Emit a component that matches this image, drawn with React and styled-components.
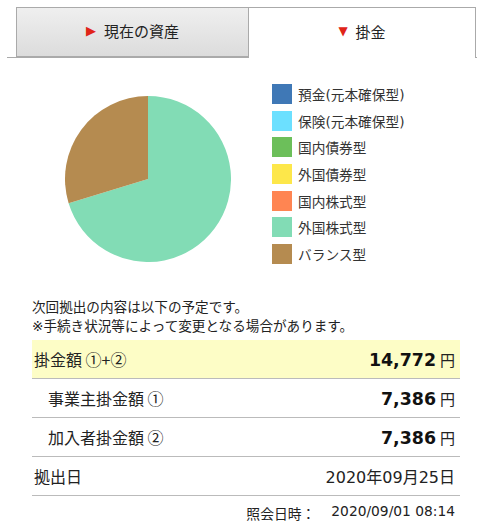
import * as React from "react"
import styled, { createGlobalStyle } from "styled-components"

const GlobalStyle = createGlobalStyle`
  body {
    margin: 0;
    background: #ffffff;
    font-family: "DejaVu Sans", "Noto Sans CJK JP", sans-serif;
    color: #222222;
  }
`

const legend = [
  { label: "預金(元本確保型)", color: "#3f78b6" },
  { label: "保険(元本確保型)", color: "#6ce0ff" },
  { label: "国内債券型", color: "#6cbf5a" },
  { label: "外国債券型", color: "#fde74a" },
  { label: "国内株式型", color: "#ff8552" },
  { label: "外国株式型", color: "#82dcb5" },
  { label: "バランス型", color: "#b58b50" },
]

const rows = [
  { label: "掛金額 ①+②", amount: "14,772", highlight: true },
  { label: "事業主掛金額 ①", amount: "7,386", indent: true },
  { label: "加入者掛金額 ②", amount: "7,386", indent: true },
]

const slice = (cx, cy, r, from, to) => {
  const p = (a) => {
    const rad = ((a - 90) * Math.PI) / 180
    return [cx + r * Math.cos(rad), cy + r * Math.sin(rad)]
  }
  const [x1, y1] = p(from)
  const [x2, y2] = p(to)
  const large = to - from > 180 ? 1 : 0
  return `M${cx},${cy} L${x1},${y1} A${r},${r} 0 ${large} 1 ${x2},${y2} Z`
}

const App = () => (
  <Page>
    <GlobalStyle />
    <TabBar>
      <Tab>
        <Arrow>▶</Arrow>現在の資産
      </Tab>
      <Tab $active>
        <Arrow $down>▼</Arrow>掛金
      </Tab>
    </TabBar>

    <ChartArea>
      <Pie viewBox="0 0 166 166" width="166" height="166">
        <path d={slice(83, 83, 83, 0, 253)} fill="#82dcb5" />
        <path d={slice(83, 83, 83, 253, 360)} fill="#b58b50" />
      </Pie>
      <Legend>
        {legend.map((item) => (
          <LegendItem key={item.label}>
            <Swatch $color={item.color} />
            {item.label}
          </LegendItem>
        ))}
      </Legend>
    </ChartArea>

    <Note>
      次回拠出の内容は以下の予定です。
      <br />
      ※手続き状況等によって変更となる場合があります。
    </Note>

    <Table>
      {rows.map((row) => (
        <Row key={row.label} $highlight={row.highlight}>
          <Label $indent={row.indent}>{row.label}</Label>
          <Value>
            <Amount>{row.amount}</Amount>
            <Yen>円</Yen>
          </Value>
        </Row>
      ))}
      <Row>
        <Label>拠出日</Label>
        <Value>2020年09月25日</Value>
      </Row>
    </Table>

    <Footer>
      <span>照会日時：</span>
      <span>2020/09/01 08:14</span>
    </Footer>
  </Page>
)

export default App

const Page = styled.div`
  width: 477px;
  padding-top: 7px;
`

const TabBar = styled.div`
  display: flex;
  margin-left: 7px;
  padding-left: 9px;
  border-bottom: 1px solid #aaaaaa;
  height: 51px;
  box-sizing: border-box;
`

const Tab = styled.div`
  box-sizing: border-box;
  display: flex;
  align-items: center;
  justify-content: center;
  gap: 8px;
  font-size: 15px;
  color: #222222;
  border: 1px solid #aaaaaa;
  width: ${(p) => (p.$active ? "228px" : "233px")};
  height: ${(p) => (p.$active ? "51px" : "50px")};
  margin-left: ${(p) => (p.$active ? "-1px" : "0")};
  border-bottom: ${(p) => (p.$active ? "none" : "1px solid #aaaaaa")};
  background: ${(p) =>
    p.$active ? "#ffffff" : "linear-gradient(#efefef, #dcdcdc)"};
  padding-bottom: 4px;
`

const Arrow = styled.span`
  color: #e02418;
  font-size: ${(p) => (p.$down ? "12px" : "13px")};
  line-height: 1;
`

const ChartArea = styled.div`
  display: flex;
  align-items: flex-start;
  padding: 26px 0 0 65px;
  height: 230px;
  box-sizing: border-box;
`

const Pie = styled.svg`
  display: block;
  margin-top: 12px;
`

const Legend = styled.div`
  display: flex;
  flex-direction: column;
  gap: 6.7px;
  margin-left: 41px;
`

const LegendItem = styled.div`
  display: flex;
  align-items: center;
  gap: 6px;
  height: 20px;
  font-size: 13.7px;
  color: #333333;
`

const Swatch = styled.span`
  width: 20px;
  height: 20px;
  background: ${(p) => p.$color};
`

const Note = styled.div`
  margin: 10px 0 0 32px;
  font-size: 13.6px;
  line-height: 19px;
  color: #222222;
`

const Table = styled.div`
  margin: 4px 0 0 32px;
  width: 428px;
`

const Row = styled.div`
  display: flex;
  align-items: center;
  justify-content: space-between;
  height: 39px;
  box-sizing: border-box;
  padding: 0 5px 0 2px;
  border-bottom: 1px solid #bbbbbb;
  background: ${(p) => (p.$highlight ? "#fdfdc6" : "transparent")};
  font-size: 16px;
`

const Label = styled.span`
  font-family: "Noto Sans CJK JP", "DejaVu Sans", sans-serif;
  padding-left: ${(p) => (p.$indent ? "14px" : "0")};
`

const Value = styled.span`
  display: flex;
  align-items: baseline;
  gap: 4px;
`

const Amount = styled.span`
  font-weight: bold;
  font-size: 17.4px;
  color: #111111;
`

const Yen = styled.span`
  font-size: 15px;
`

const Footer = styled.div`
  display: flex;
  justify-content: flex-end;
  gap: 16px;
  width: 455px;
  margin-top: 7px;
  font-size: 13.8px;
  color: #222222;
`
